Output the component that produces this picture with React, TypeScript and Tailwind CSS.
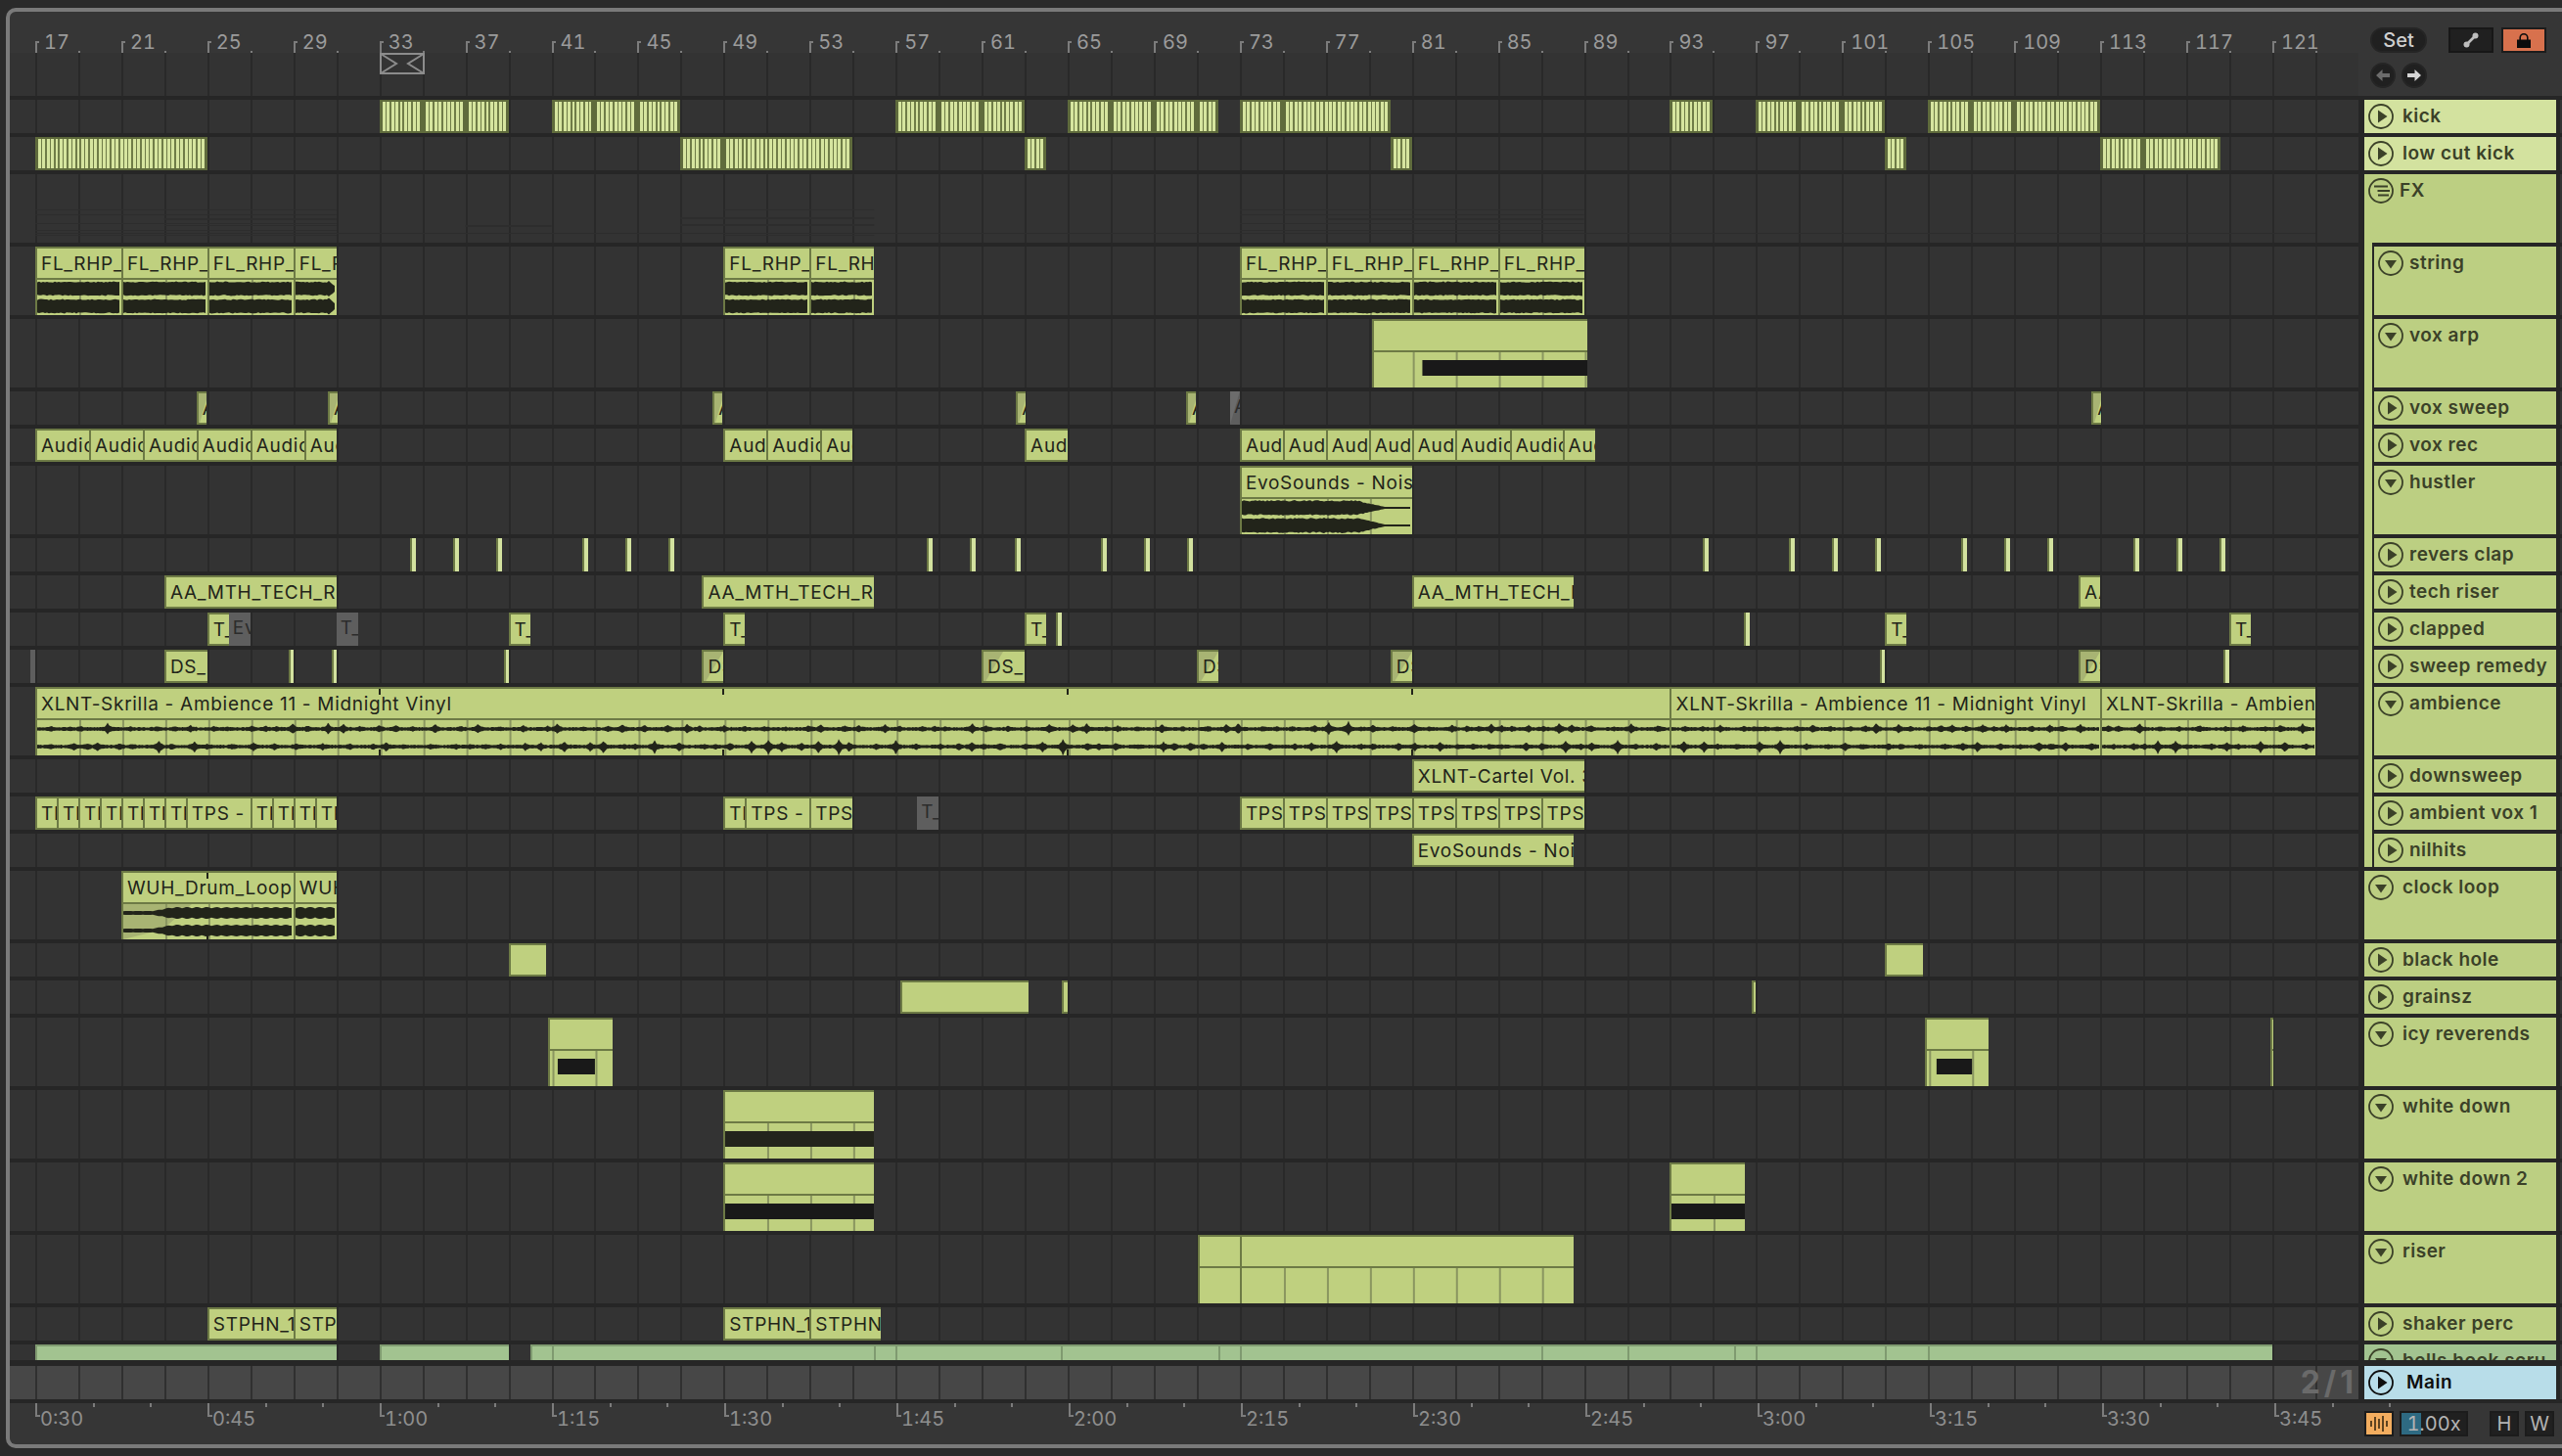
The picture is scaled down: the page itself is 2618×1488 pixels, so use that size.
import React from 'react';

const PITCH = 21.98;
const barX = (bar: number) => 26 + PITCH * (bar - 17);

const GRID =
  'bg-[repeating-linear-gradient(90deg,#292929_26px,#292929_28px,#333333_28px,#333333_69.96px)]';
const GRID_MAIN =
  'bg-[repeating-linear-gradient(90deg,#303030_26px,#303030_28px,#474747_28px,#474747_69.96px)]';

type Note = { from: number; to: number; color?: string };
type ClipType = {
  from: number;
  to: number;
  label?: string;
  kind?: 'kick' | 'thin' | 'mute' | 'bright' | 'auto' | 'audio' | 'midi';
  wave?: 'dense' | 'spiky' | 'fade' | 'loop' | 'lump';
  notes?: Note[];
  fade?: boolean;
  marks?: number[];
};
type Row = {
  name: string;
  h: number;
  icon: 'play' | 'down' | 'group';
  tone?: 'bright' | 'auto' | 'main';
  nested?: boolean;
  clips: ClipType[];
};

const kick = (...pairs: number[][]): ClipType[] =>
  pairs.map(([from, to]) => ({ from, to, kind: 'kick' }));
const thin = (label: string | undefined, ...pairs: number[][]): ClipType[] =>
  pairs.map(([from, to]) => ({ from, to, label, kind: 'thin' }));
const bright = (...starts: number[]): ClipType[] =>
  starts.map((from) => ({ from: from - 0.07, to: from + 0.21, kind: 'bright' }));
const tall = (label: string, wave: ClipType['wave'], ...pairs: number[][]): ClipType[] =>
  pairs.map(([from, to]) => ({ from, to, label, kind: 'audio', wave }));

const rows: Row[] = [
  {
    name: 'kick',
    h: 34,
    icon: 'play',
    tone: 'bright',
    clips: kick(
      [33, 35], [35, 37], [37, 39], [41, 43], [43, 45], [45, 47], [57, 59], [59, 61], [61, 63],
      [65, 67], [67, 69], [69, 71], [71, 72], [73, 75], [75, 80], [93, 95], [97, 99], [99, 101],
      [101, 103], [105, 107], [107, 109], [109, 113],
    ),
  },
  {
    name: 'low cut kick',
    h: 34,
    icon: 'play',
    tone: 'bright',
    clips: kick([17, 25], [47, 49], [49, 55], [63, 64], [80, 81], [103, 104], [113, 115], [115, 118.6]),
  },
  { name: 'FX', h: 70, icon: 'group', clips: [] },
  {
    name: 'string',
    h: 70,
    icon: 'down',
    nested: true,
    clips: tall(
      'FL_RHP_Loop',
      'dense',
      [17, 21], [21, 25], [25, 29], [29, 31], [49, 53], [53, 56], [73, 77], [77, 81], [81, 85], [85, 89],
    ),
  },
  {
    name: 'vox arp',
    h: 70,
    icon: 'down',
    nested: true,
    clips: [{ from: 79.15, to: 89.15, kind: 'midi', notes: [{ from: 81.4, to: 89.15 }] }],
  },
  {
    name: 'vox sweep',
    h: 34,
    icon: 'play',
    nested: true,
    clips: [
      ...[24.5, 30.6, 48.5, 62.6, 70.5, 112.6].map((from): ClipType => ({
        from,
        to: from + 0.45,
        label: 'A',
        kind: 'thin',
        fade: true,
      })),
      { from: 72.55, to: 73, label: 'A', kind: 'mute', fade: true },
    ],
  },
  {
    name: 'vox rec',
    h: 34,
    icon: 'play',
    nested: true,
    clips: thin(
      'Audio',
      [17, 19.5], [19.5, 22], [22, 24.5], [24.5, 27], [27, 29.5], [29.5, 31], [49, 51], [51, 53.5], [53.5, 55],
      [63, 65], [73, 75], [75, 77], [77, 79], [79, 81], [81, 83], [83, 85.55], [85.55, 88], [88, 89.5],
    ),
  },
  {
    name: 'hustler',
    h: 70,
    icon: 'down',
    nested: true,
    clips: tall('EvoSounds - Noise', 'fade', [73, 81]),
  },
  {
    name: 'revers clap',
    h: 34,
    icon: 'play',
    nested: true,
    clips: bright(
      34.5, 36.5, 38.5, 42.5, 44.5, 46.5, 58.5, 60.5, 62.6, 66.6, 68.6, 70.6, 94.6, 98.6, 100.6,
      102.6, 106.6, 108.6, 110.6, 114.6, 116.6, 118.6,
    ),
  },
  {
    name: 'tech riser',
    h: 34,
    icon: 'play',
    nested: true,
    clips: thin('AA_MTH_TECH_Riser', [23, 31], [48, 56], [81, 88.5], [112, 113]),
  },
  {
    name: 'clapped',
    h: 34,
    icon: 'play',
    nested: true,
    clips: [
      ...thin('T_', [25, 26], [39, 40], [49, 50], [63, 64], [103, 104], [119, 120]),
      { from: 26, to: 27, label: 'Evo', kind: 'mute' },
      { from: 31, to: 32, label: 'T_', kind: 'mute' },
      ...bright(64.5, 96.5),
    ],
  },
  {
    name: 'sweep remedy',
    h: 34,
    icon: 'play',
    nested: true,
    clips: [
      { from: 16.75, to: 17, kind: 'mute' },
      { from: 23, to: 25, label: 'DS_', kind: 'thin' },
      ...[48, 71, 80, 112].map((from): ClipType => ({ from, to: from + 1, label: 'DS_', kind: 'thin', fade: true })),
      { from: 61, to: 63, label: 'DS_', kind: 'thin', fade: true },
      ...[28.78, 30.78, 38.78, 102.75, 118.75].map((from): ClipType => ({ from, to: from + 0.23, kind: 'bright' })),
    ],
  },
  {
    name: 'ambience',
    h: 70,
    icon: 'down',
    nested: true,
    clips: [
      { from: 17, to: 93, label: 'XLNT-Skrilla - Ambience 11 - Midnight Vinyl', kind: 'audio', wave: 'spiky', marks: [33, 49, 65, 81] },
      { from: 93, to: 113, label: 'XLNT-Skrilla - Ambience 11 - Midnight Vinyl', kind: 'audio', wave: 'spiky' },
      { from: 113, to: 123, label: 'XLNT-Skrilla - Ambience 11 - Midnight Vinyl', kind: 'audio', wave: 'spiky' },
    ],
  },
  {
    name: 'downsweep',
    h: 34,
    icon: 'play',
    nested: true,
    clips: thin('XLNT-Cartel Vol. 3', [81, 89]),
  },
  {
    name: 'ambient vox 1',
    h: 34,
    icon: 'play',
    nested: true,
    clips: [
      ...thin(
        'TPS - Bass',
        [17, 18], [18, 19], [19, 20], [20, 21], [21, 22], [22, 23], [23, 24], [24, 27], [27, 28], [28, 29],
        [29, 30], [30, 31], [49, 50], [50, 53], [53, 55], [73, 75], [75, 77], [77, 79], [79, 81], [81, 83],
        [83, 85], [85, 87], [87, 89],
      ),
      { from: 58, to: 59, label: 'T_', kind: 'mute' },
    ],
  },
  {
    name: 'nilhits',
    h: 34,
    icon: 'play',
    nested: true,
    clips: thin('EvoSounds - Noise', [81, 88.5]),
  },
  {
    name: 'clock loop',
    h: 70,
    icon: 'down',
    clips: [
      { from: 21, to: 29, label: 'WUH_Drum_Loop', kind: 'audio', wave: 'loop', fade: true, marks: [25] },
      { from: 29, to: 31, label: 'WUH_Drum_Loop', kind: 'audio', wave: 'lump' },
    ],
  },
  { name: 'black hole', h: 34, icon: 'play', clips: thin(undefined, [39, 40.75], [103, 104.75]) },
  { name: 'grainsz', h: 34, icon: 'play', clips: thin(undefined, [57.2, 63.2], [64.72, 65], [96.8, 97]) },
  {
    name: 'icy reverends',
    h: 70,
    icon: 'down',
    clips: [
      { from: 40.84, to: 43.84, kind: 'midi', notes: [{ from: 41.2, to: 42.93 }] },
      { from: 104.85, to: 107.8, kind: 'midi', notes: [{ from: 105.3, to: 106.95 }] },
      { from: 120.9, to: 121.05, kind: 'midi' },
    ],
  },
  {
    name: 'white down',
    h: 70,
    icon: 'down',
    clips: [{ from: 49, to: 56, kind: 'midi', notes: [{ from: 49, to: 56, color: '#23241c' }] }],
  },
  {
    name: 'white down 2',
    h: 70,
    icon: 'down',
    clips: [
      { from: 49, to: 56, kind: 'midi', notes: [{ from: 49, to: 56 }] },
      { from: 93, to: 96.5, kind: 'midi', notes: [{ from: 93, to: 96.5 }] },
    ],
  },
  {
    name: 'riser',
    h: 70,
    icon: 'down',
    clips: [
      { from: 71.05, to: 73, kind: 'midi' },
      { from: 73, to: 88.5, kind: 'midi' },
    ],
  },
  {
    name: 'shaker perc',
    h: 34,
    icon: 'play',
    clips: thin('STPHN_1_Shaker', [25, 29], [29, 31], [49, 53], [53, 56.3]),
  },
  {
    name: 'bells hook scru',
    h: 16,
    icon: 'down',
    tone: 'auto',
    clips: [
      [17, 31], [33, 39], [40, 41], [41, 56], [56, 57], [57, 64.7], [64.7, 72], [72, 73], [73, 87],
      [87, 91], [91, 96], [96, 97], [97, 103], [103, 105], [105, 121],
    ].map(([from, to]): ClipType => ({ from, to, kind: 'auto' })),
  },
];

const fxSmudges = [
  [17, 31, 36, 1], [17, 31, 41, 1], [17, 31, 50, 1], [17, 31, 57, 1], [17, 31, 62, 1], [23, 31, 45, 2],
  [23, 31, 52, 1], [17, 123, 60, 1], [49, 56, 36, 1], [47, 56, 44, 2], [47, 56, 51, 2], [49, 56, 62, 1],
  [73, 89, 36, 1], [73, 89, 41, 1], [73, 89, 50, 1], [77, 89, 45, 2], [73, 89, 57, 1], [37, 41, 52, 2],
];

const rng = (seed: number) => {
  let n = seed;
  return () => {
    n += 1;
    const v = Math.sin(n * 127.1 + seed * 3.7) * 43758.5453;
    return v - Math.floor(v);
  };
};

const wavePath = (kind: NonNullable<ClipType['wave']>, w: number, seed: number, taper: boolean) => {
  const channel = (cy: number, s: number, boost: number) => {
    const r = rng(s);
    const peaks: { at: number; amp: number }[] = [];
    for (let p = 6 + r() * 10; p < w; p += 10 + r() * 18) peaks.push({ at: p, amp: 1 + r() * r() * 6 });
    const top: string[] = [];
    const bot: string[] = [];
    for (let x = 0; x <= w; x += kind === 'spiky' ? 1 : 2) {
      let up = 0;
      let down = 0;
      if (kind === 'dense') {
        up = 6.2 + r() * 1.2;
        down = 6.2 + r() * 1.2;
        if (taper && w - x < 8) {
          up *= (w - x) / 8 + 0.2;
          down *= (w - x) / 8 + 0.2;
        }
      } else if (kind === 'spiky') {
        const spike = peaks.reduce((m, p) => Math.max(m, p.amp * Math.exp(-Math.abs(p.at - x) / 2)), 0);
        const base = 1.2 + r() * 0.9;
        up = base + spike;
        down = base + spike * boost;
      } else if (kind === 'fade') {
        const env = x < 118 ? 1 : Math.max(0, 1 - (x - 118) / 28);
        up = 1 + (5.4 + r() * 1.5) * env;
        down = 1 + (5.4 + r() * 1.5) * env;
      } else {
        const env = kind === 'lump' ? 1 : x < 30 ? 0.2 : x < 50 ? 0.2 + ((x - 30) / 20) * 0.8 : 1;
        const lump = 3.6 + 1.4 * Math.abs(Math.sin(x / 3.2));
        up = 1 + lump * env;
        down = 1 + lump * env;
      }
      top.push(`${x},${(cy - up).toFixed(1)}`);
      bot.unshift(`${x},${(cy + down).toFixed(1)}`);
    }
    return `M${top.join('L')}L${bot.join('L')}Z`;
  };
  return channel(9, seed, 0.8) + channel(27, seed + 77, 1.3);
};

const gridBars = (from: number, to: number) => {
  const out: number[] = [];
  for (let b = 17; b < to; b += 2) if (b > from) out.push(b);
  return out;
};

const ClipBody = ({ clip, w }: { clip: ClipType; w: number }) => (
  <svg width={w} height={36} className="block">
    {clip.fade && <polygon points="0,0 70,0 40,26 0,36" fill="#a8b473" />}
    {gridBars(clip.from, clip.to).map((b) => (
      <rect key={b} x={(b - clip.from) * PITCH - 1} y={0} width={2} height={36} fill="#8a9660" />
    ))}
    {clip.wave && (
      <path d={wavePath(clip.wave, w, Math.round(clip.from * 13) + 5, clip.to === 31)} fill="#22241a" />
    )}
    {clip.notes?.map((n) => (
      <rect key={n.from} x={(n.from - clip.from) * PITCH} y={8} width={(n.to - n.from) * PITCH} height={16} fill={n.color ?? '#191919'} />
    ))}
  </svg>
);

const Clip = ({ clip, h }: { clip: ClipType; h: number }) => {
  const left = barX(clip.from);
  const width = (clip.to - clip.from) * PITCH;
  const style = { left, width };

  if (clip.kind === 'kick') {
    return (
      <div
        style={style}
        className="absolute inset-y-0 border-x-[3px] border-y-2 border-[#5f6b3c] bg-[repeating-linear-gradient(90deg,#d6e59f_0,#d6e59f_2.9px,#6f7c47_2.9px,#6f7c47_4.4px)]"
      />
    );
  }
  if (clip.kind === 'bright') {
    return <div style={style} className="absolute inset-y-0 border-l-2 border-[#6d7a45] bg-[#d3e29f]" />;
  }
  if (clip.kind === 'auto') {
    return <div style={style} className="absolute inset-y-0 border-l-2 border-t-2 border-[#7f9a70] bg-[#a2c390]" />;
  }
  if (clip.kind === 'audio' || clip.kind === 'midi') {
    return (
      <div style={style} className="absolute inset-y-0 overflow-hidden border-l-2 border-t-2 border-[#6d7a45] bg-[#bfd07f]">
        <div className="h-[30px] overflow-hidden whitespace-nowrap pl-[4px] text-[19px] leading-[31px] tracking-[0.7px] text-[#22241a]">
          {clip.label}
        </div>
        <div className="h-[2px] bg-[#6d7a45]" />
        <ClipBody clip={clip} w={width - 2} />
        {clip.marks?.map((m) => (
          <div key={m} style={{ left: (m - clip.from) * PITCH - 3 }} className="absolute top-0 h-[6px] w-[2px] bg-[#22241a]" />
        ))}
        {clip.marks?.map((m) => (
          <div key={m} style={{ left: (m - clip.from) * PITCH - 3 }} className="absolute bottom-0 h-[6px] w-[2px] bg-[#22241a]" />
        ))}
      </div>
    );
  }
  const mute = clip.kind === 'mute';
  return (
    <div
      style={style}
      className={
        mute
          ? 'absolute inset-y-0 overflow-hidden bg-[#5e5e5e] text-[#2c2c2c]'
          : 'absolute inset-y-0 overflow-hidden border-y-2 border-l-2 border-[#6d7a45] bg-[#bfd07f] text-[#22241a]'
      }
    >
      {clip.fade && (
        <svg width={width} height={h} className="absolute left-0 top-0">
          <polygon points={`0,0 ${Math.min(width, 20)},0 0,${h}`} fill={mute ? '#6c6c6c' : '#a8b473'} />
        </svg>
      )}
      <div className="relative overflow-hidden whitespace-nowrap pl-[4px] text-[19px] leading-[31px] tracking-[0.7px]">{clip.label}</div>
    </div>
  );
};

const TrackIcon = ({ icon, color }: { icon: Row['icon']; color: string }) => (
  <svg width={26} height={26} viewBox="0 0 26 26" className="shrink-0">
    <circle cx={13} cy={13} r={12} fill="none" stroke={color} strokeWidth={1.8} />
    {icon === 'play' && <polygon points="10,6.5 19.5,13 10,19.5" fill={color} />}
    {icon === 'down' && <polygon points="7,10 19,10 13,18.5" fill={color} />}
    {icon === 'group' && <path d="M6 8.5H20M9.5 13H22M10 17.5H21" stroke={color} strokeWidth={1.8} fill="none" />}
  </svg>
);

const TrackHeader = ({ row }: { row: Row }) => {
  const bg =
    row.tone === 'bright' ? 'bg-[#d3e29f]' : row.tone === 'auto' ? 'bg-[#a2c390]' : 'bg-[#bccf82]';
  const gap = row.icon === 'group' || row.nested ? 'gap-[6px]' : 'gap-[9px]';
  return (
    <div className="flex w-[196px] shrink-0">
      {row.nested && (
        <div className="relative w-[10px] shrink-0">
          <div className="absolute -top-[4px] bottom-0 left-0 w-[10px] border-r-2 border-[#262626] bg-[#bccf82]" />
        </div>
      )}
      <div className={`min-w-0 flex-1 overflow-hidden ${bg}`}>
        <div className={`flex h-[34px] items-center pl-[4px] ${gap}`}>
          <TrackIcon icon={row.icon} color="#3b4128" />
          <span className="mt-[1px] whitespace-nowrap text-[19px] font-semibold tracking-[0.5px] text-[#3b4128]">{row.name}</span>
        </div>
      </div>
    </div>
  );
};

const TrackRow = ({ row }: { row: Row }) => (
  <div style={{ height: row.h }} className="flex shrink-0">
    <div className={`relative w-[2400px] shrink-0 overflow-hidden ${GRID}`}>
      {row.icon === 'group' && (
        <svg width={2400} height={70} className="absolute left-0 top-0">
          {fxSmudges.map(([from, to, y, hh], i) => (
            <rect key={i} x={barX(from)} y={y} width={(to - from) * PITCH} height={hh} fill="#2d2d2d" />
          ))}
        </svg>
      )}
      {row.clips.map((c, i) => (
        <Clip key={i} clip={c} h={row.h} />
      ))}
    </div>
    <div className="w-[6px] shrink-0" />
    <TrackHeader row={row} />
    <div className="w-[4px] shrink-0" />
    <div className="flex-1 bg-[#343434]" />
  </div>
);

const barLabels = Array.from({ length: 27 }, (_, i) => 17 + i * 4);
const timeLabels = ['0:30', '0:45', '1:00', '1:15', '1:30', '1:45', '2:00', '2:15', '2:30', '2:45', '3:00', '3:15', '3:30', '3:45'];

const TopBar = () => (
  <div className="flex h-[86px] shrink-0">
    <div className="w-[2400px] shrink-0">
      <div className="relative h-[42px] text-[20px] tabular-nums text-[#9b9b9b]">
        {barLabels.map((b) => (
          <React.Fragment key={b}>
            <div style={{ left: barX(b) }} className="absolute top-[30px] h-[12px] w-[4px] border-l-2 border-t-2 border-[#7c7c7c]" />
            {b < 123 && (
              <span style={{ left: barX(b) + 9 }} className="absolute top-[18px] leading-[26px]">
                {b}
              </span>
            )}
            <div style={{ left: barX(b + 2) }} className="absolute top-[40px] h-[2px] w-[2px] bg-[#7c7c7c]" />
          </React.Fragment>
        ))}
      </div>
      <div className={`relative h-[44px] ${GRID}`}>
        <svg width={46} height={22} viewBox="0 0 46 22" style={{ left: barX(33) }} className="absolute top-0">
          <rect x={1} y={1} width={44} height={20} fill="#333333" stroke="#8c8c8c" strokeWidth={2} />
          <path d="M1 1 L17 11 L1 21 M45 1 L29 11 L45 21" fill="none" stroke="#8c8c8c" strokeWidth={2} />
        </svg>
      </div>
    </div>
    <div className="flex-1 pl-[12px] pt-[16px]">
      <div className="flex items-center">
        <button className="h-[26px] w-[58px] rounded-full border-2 border-[#252525] bg-[#202020] text-[20px] font-medium leading-none text-[#cfcfcf]">
          Set
        </button>
        <button className="ml-[22px] flex h-[26px] w-[46px] items-center justify-center border-2 border-[#171717] bg-[#202020]">
          <svg width={16} height={16} viewBox="0 0 16 16">
            <path d="M3.5 12.5 L12.5 3.5" stroke="#bdbdbd" strokeWidth={2.6} />
            <circle cx={3.5} cy={12.5} r={3} fill="#bdbdbd" />
            <circle cx={12.5} cy={3.5} r={3} fill="#bdbdbd" />
          </svg>
        </button>
        <button className="ml-[8px] flex h-[26px] w-[46px] items-center justify-center border-2 border-[#1c1c1c] bg-[#d8714d]">
          <svg width={14} height={15} viewBox="0 0 14 15">
            <path d="M3.2 7V4.6a3.8 3.8 0 0 1 7.6 0V7" fill="none" stroke="#0c0c0c" strokeWidth={1.6} />
            <rect x={0} y={6.5} width={14} height={8.5} fill="#0c0c0c" />
          </svg>
        </button>
      </div>
      <div className="mt-[10px] flex gap-[6px]">
        <button className="flex h-[26px] w-[26px] items-center justify-center rounded-full border-2 border-[#252525] bg-[#202020]">
          <svg width={16} height={14} viewBox="0 0 16 14">
            <path d="M1 7L7.5 1V5H15V9H7.5V13Z" fill="#6c6c6c" />
          </svg>
        </button>
        <button className="flex h-[26px] w-[26px] items-center justify-center rounded-full border-2 border-[#252525] bg-[#202020]">
          <svg width={16} height={14} viewBox="0 0 16 14">
            <path d="M15 7L8.5 1V5H1V9H8.5V13Z" fill="#d6d6d6" />
          </svg>
        </button>
      </div>
    </div>
  </div>
);

const BottomBar = () => (
  <div className="flex h-[42px] shrink-0">
    <div className="relative w-[2400px] shrink-0 text-[20px] tabular-nums text-[#8e8e8e]">
      {timeLabels.map((t, i) => {
        const x = barX(17) + i * 176;
        return (
          <React.Fragment key={t}>
            <div style={{ left: x }} className="absolute top-0 h-[14px] w-[5px] border-b-2 border-l-2 border-[#7c7c7c]" />
            <div style={{ left: x + 58.67 }} className="absolute top-0 h-[4px] w-[2px] bg-[#7c7c7c]" />
            <div style={{ left: x + 117.33 }} className="absolute top-0 h-[4px] w-[2px] bg-[#7c7c7c]" />
            <span style={{ left: x + 5 }} className="absolute top-[3px] leading-[26px]">
              {t}
            </span>
          </React.Fragment>
        );
      })}
    </div>
    <div className="ml-[6px] flex flex-1 pt-[8px]">
      <div className="flex h-[26px] w-[30px] items-center justify-center border-2 border-[#1c1c1c] bg-[#f3ad5f]">
        <svg width={20} height={18} viewBox="0 0 20 18">
          <path d="M2 6V12M6 2V16M10 4V14M14 1V17M18 6V12" stroke="#3a2a12" strokeWidth={1.6} />
        </svg>
      </div>
      <div className="relative ml-[6px] h-[26px] w-[70px] border-2 border-[#1c1c1c] bg-[#202020] text-center text-[20px] leading-[22px] tabular-nums text-[#b4b4b4]">
        <div className="absolute inset-y-0 left-0 w-[20px] bg-[#2e6a82]" />
        <span className="relative">1.00x</span>
      </div>
      <div className="ml-[22px] h-[26px] w-[30px] border-2 border-[#1c1c1c] bg-[#202020] text-center text-[20px] leading-[22px] text-[#b4b4b4]">H</div>
      <div className="ml-[6px] h-[26px] w-[30px] border-2 border-[#1c1c1c] bg-[#202020] text-center text-[20px] leading-[22px] text-[#b4b4b4]">W</div>
    </div>
  </div>
);

const App: React.FC = () => (
  <div className="h-[1488px] w-[2618px] overflow-hidden bg-[#2a2a2a] pl-[6px] pt-[8px] font-['Inter','Liberation_Sans',sans-serif]">
    <div className="flex h-[1472px] flex-col overflow-hidden rounded-l-[10px] border-y-4 border-l-4 border-[#7a7a7a] bg-[#363636]">
      <TopBar />
      <div className="flex flex-1 flex-col gap-[4px] bg-[#262626] py-[4px]">
        {rows.map((r) => (
          <TrackRow key={r.name} row={r} />
        ))}
        <div className="mt-[2px] flex h-[34px] shrink-0">
          <div className={`relative w-[2400px] shrink-0 ${GRID_MAIN}`}>
            <span className="absolute right-[1px] top-0 text-[32px] font-bold leading-[34px] tracking-[4px] text-[#6a6a6a]">2/1</span>
          </div>
          <div className="w-[6px] shrink-0" />
          <div className="flex w-[196px] shrink-0 items-center gap-[13px] bg-[#b8dde9] pl-[4px]">
            <TrackIcon icon="play" color="#0e0e0e" />
            <span className="mt-[1px] text-[19px] font-semibold tracking-[0.5px] text-[#0e0e0e]">Main</span>
          </div>
          <div className="w-[4px] shrink-0" />
          <div className="flex-1 bg-[#343434]" />
        </div>
      </div>
      <BottomBar />
    </div>
  </div>
);

export default App;
